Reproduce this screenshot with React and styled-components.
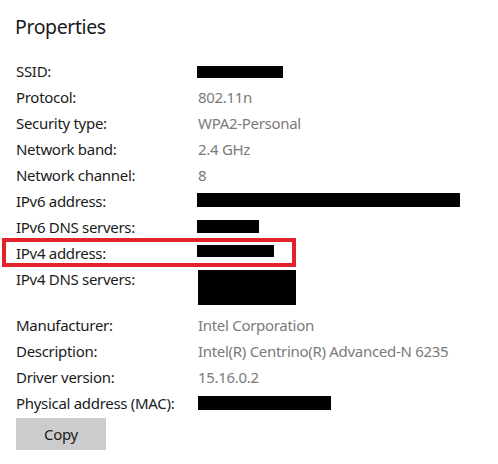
import styled, { createGlobalStyle } from "styled-components";

const GlobalStyle = createGlobalStyle`
  html, body {
    margin: 0;
    padding: 0;
    background: #ffffff;
  }

  body {
    font-family: "Noto Sans", "Open Sans", sans-serif;
    color: #1a1a1a;
  }
`;

const Page = styled.div`
  width: 498px;
  height: 464px;
  box-sizing: border-box;
  padding: 13px 0 0 16px;
  overflow: hidden;
`;

const Title = styled.h2`
  margin: 0 0 0 -1px;
  font-size: 19.5px;
  font-weight: 400;
  line-height: 28px;
  letter-spacing: -0.4px;
  color: #1a1a1a;
`;

const PropertyList = styled.dl`
  display: grid;
  grid-template-columns: 182px 1fr;
  margin: 17px 0 0;
`;

const Row = styled.div`
  display: contents;
`;

const Label = styled.dt`
  position: relative;
  margin: 0;
  font-size: 15px;
  line-height: 26px;
  letter-spacing: -0.3px;
  color: #1a1a1a;
  white-space: nowrap;

  ${({ $highlighted }) =>
    $highlighted &&
    `
    &::after {
      content: "";
      position: absolute;
      left: -14px;
      top: -2px;
      width: 294px;
      height: 29px;
      box-sizing: border-box;
      border: 4px solid #e3232c;
      pointer-events: none;
    }
  `}
`;

const Value = styled.dd`
  margin: 0;
  min-height: ${({ $tall }) => ($tall ? 46 : 26)}px;
  font-size: 15px;
  line-height: 26px;
  letter-spacing: -0.3px;
  color: #7a7a7a;
  white-space: nowrap;
`;

const Redacted = styled.span`
  display: block;
  width: ${({ $w }) => $w}px;
  height: ${({ $h }) => $h}px;
  margin-top: ${({ $top }) => $top}px;
  margin-left: ${({ $left = 0 }) => $left}px;
  background: #000000;
`;

const CopyButton = styled.button`
  display: block;
  width: 90px;
  height: 32px;
  margin-top: 2px;
  padding: 0;
  border: none;
  background: #cccccc;
  font-family: inherit;
  font-size: 15px;
  letter-spacing: -0.3px;
  color: #1a1a1a;
  cursor: pointer;
`;

const properties = [
  { label: "SSID:", hidden: { w: 86, h: 12, top: 8, left: -1 } },
  { label: "Protocol:", value: "802.11n" },
  { label: "Security type:", value: "WPA2-Personal" },
  { label: "Network band:", value: "2.4 GHz" },
  { label: "Network channel:", value: "8" },
  { label: "IPv6 address:", hidden: { w: 263, h: 14, top: 5, left: -1 } },
  { label: "IPv6 DNS servers:", hidden: { w: 62, h: 13, top: 6, left: -1 } },
  { label: "IPv4 address:", hidden: { w: 77, h: 12, top: 5, left: -1 }, highlighted: true },
  { label: "IPv4 DNS servers:", hidden: { w: 98, h: 35, top: 4 }, tall: true },
  { label: "Manufacturer:", value: "Intel Corporation" },
  { label: "Description:", value: "Intel(R) Centrino(R) Advanced-N 6235" },
  { label: "Driver version:", value: "15.16.0.2" },
  { label: "Physical address (MAC):", hidden: { w: 133, h: 14, top: 6 } },
];

export default function App() {
  return (
    <>
      <GlobalStyle />
      <Page>
        <Title>Properties</Title>
        <PropertyList>
          {properties.map((p) => (
            <Row key={p.label}>
              <Label $highlighted={p.highlighted}>{p.label}</Label>
              <Value $tall={p.tall}>
                {p.hidden ? (
                  <Redacted $w={p.hidden.w} $h={p.hidden.h} $top={p.hidden.top} $left={p.hidden.left} />
                ) : (
                  p.value
                )}
              </Value>
            </Row>
          ))}
        </PropertyList>
        <CopyButton type="button">Copy</CopyButton>
      </Page>
    </>
  );
}
